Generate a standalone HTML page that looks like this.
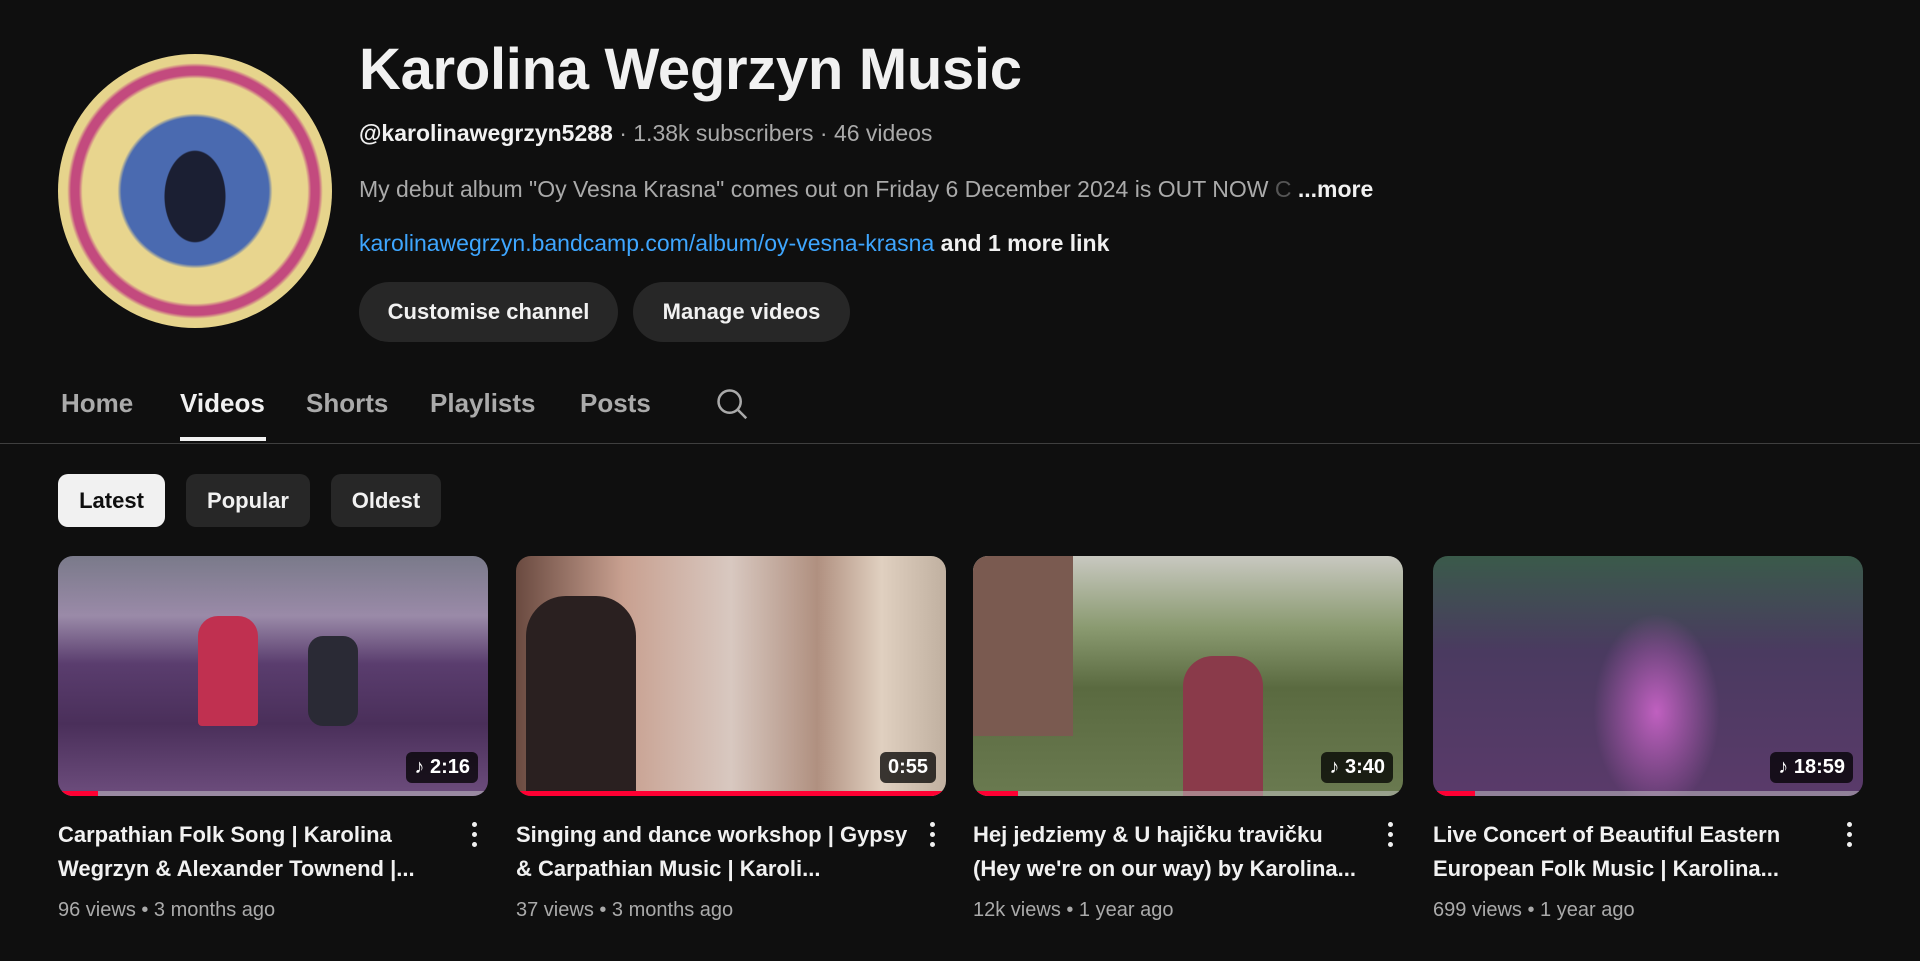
<!DOCTYPE html>
<html><head><meta charset="utf-8"><style>
*{margin:0;padding:0;box-sizing:border-box}
body{width:1920px;height:961px;background:#0f0f0f;color:#f1f1f1;font-family:"Liberation Sans",Arial,sans-serif;overflow:hidden;position:relative}
.abs{position:absolute}
.avatar{left:58px;top:54px;width:274px;height:274px;border-radius:50%;overflow:hidden;
background:radial-gradient(ellipse 50px 75px at 50% 52%,#1b1f33 0 60%,transparent 62%),
radial-gradient(circle at 50% 55%,#e8e0d0 0 8%,transparent 9%),
radial-gradient(circle at 50% 50%,#4a6ab0 0 38%,#e8d58e 40% 58%,#c34a7e 60% 64%,#e6d48c 66% 78%,#5a78c0 79% 82%,#e3cf86 83%);}
h1{left:359px;top:36px;font-size:58px;font-weight:700;letter-spacing:-0.3px;white-space:nowrap}
.meta1{left:359px;top:120px;font-size:23px;color:#aaa;white-space:nowrap}
.meta1 b{color:#f1f1f1}
.desc{left:359px;top:176px;font-size:23px;color:#aaa;white-space:nowrap}
.desc b{color:#f1f1f1}
.link{left:359px;top:230px;font-size:23px;white-space:nowrap;color:#f1f1f1;font-weight:700}
.link span{color:#3ea6ff;font-weight:400}
.btn{top:282px;height:60px;border-radius:30px;background:#272727;font-size:22px;font-weight:700;display:flex;align-items:center;justify-content:center}
.tab{top:388px;font-size:26px;font-weight:700;color:#aaa}
.sep{left:0;top:443px;width:1920px;height:1px;background:#3f3f3f}
.chip{top:474px;height:53px;border-radius:10px;background:#272727;font-size:22px;font-weight:700;display:flex;align-items:center;justify-content:center}
.th{top:556px;width:430px;height:240px;border-radius:15px;overflow:hidden}
.bar{position:absolute;left:0;bottom:0;height:5px;width:100%;background:rgba(200,200,200,.5)}
.bar i{display:block;height:5px;background:#f03}
.dur{position:absolute;right:10px;bottom:13px;background:rgba(0,0,0,.75);border-radius:6px;color:#fff;font-size:20px;font-weight:700;padding:4px 8px}
.tt{top:818px;width:400px;font-size:22px;font-weight:700;line-height:34px;color:#f1f1f1;height:68px;overflow:hidden;display:-webkit-box;-webkit-line-clamp:2;-webkit-box-orient:vertical}
.mm{top:899px;font-size:20px;color:#aaa;white-space:nowrap}
.dots{top:822px;width:6px}
.dots i{display:block;width:5px;height:5px;border-radius:50%;background:#f1f1f1;margin-bottom:5px}
</style></head><body>
<div class="abs avatar"></div>
<h1 class="abs">Karolina Wegrzyn Music</h1>
<div class="abs meta1"><b>@karolinawegrzyn5288</b> · 1.38k subscribers · 46 videos</div>
<div class="abs desc">My debut album "Oy Vesna Krasna" comes out on Friday 6 December 2024 is OUT NOW <span style="color:#555">C</span> <b>...more</b></div>
<div class="abs link"><span>karolinawegrzyn.bandcamp.com/album/oy-vesna-krasna</span> and 1 more link</div>
<div class="abs btn" style="left:359px;width:259px">Customise channel</div>
<div class="abs btn" style="left:633px;width:217px">Manage videos</div>
<div class="abs tab" style="left:61px">Home</div>
<div class="abs tab" style="left:180px;color:#f1f1f1">Videos</div>
<div class="abs" style="left:180px;top:437px;width:86px;height:4px;background:#f1f1f1"></div>
<div class="abs tab" style="left:306px">Shorts</div>
<div class="abs tab" style="left:430px">Playlists</div>
<div class="abs tab" style="left:580px">Posts</div>
<svg class="abs" style="left:713px;top:385px" width="38" height="38" viewBox="0 0 24 24" fill="none" stroke="#aaa" stroke-width="1.6"><circle cx="10.5" cy="10.5" r="7"/><path d="M15.5 15.5l5.5 5.5"/></svg>
<div class="abs sep"></div>
<div class="abs chip" style="left:58px;width:107px;background:#f1f1f1;color:#0f0f0f">Latest</div>
<div class="abs chip" style="left:186px;width:124px">Popular</div>
<div class="abs chip" style="left:331px;width:110px">Oldest</div>

<div class="abs th" style="left:58px;background:linear-gradient(180deg,#7a7a8a 0%,#9a8aa8 25%,#5a3d6e 45%,#4a2f5a 70%,#6d4d7d 100%)">
<div class="abs" style="left:140px;top:60px;width:60px;height:110px;background:#c03050;border-radius:20px 20px 4px 4px"></div>
<div class="abs" style="left:250px;top:80px;width:50px;height:90px;background:#2a2a35;border-radius:15px"></div>
<div class="bar"><i style="width:40px"></i></div><div class="dur">♪ 2:16</div></div>
<div class="abs th" style="left:516px;background:linear-gradient(90deg,#6a4a40 0%,#c8a090 25%,#d8c8c0 50%,#b09080 70%,#e0d0c0 85%,#c0b0a0 100%)">
<div class="abs" style="left:10px;top:40px;width:110px;height:200px;background:#2a2020;border-radius:40px 40px 0 0"></div>
<div class="bar" style="background:#f03"></div><div class="dur">0:55</div></div>
<div class="abs th" style="left:973px;background:linear-gradient(180deg,#c8c8c0 0%,#8a9a70 30%,#5a6a40 55%,#6a7a50 100%)">
<div class="abs" style="left:0;top:0;width:100px;height:180px;background:#7a5a50"></div>
<div class="abs" style="left:210px;top:100px;width:80px;height:140px;background:#8a3a4a;border-radius:30px 30px 0 0"></div>
<div class="bar"><i style="width:45px"></i></div><div class="dur">♪ 3:40</div></div>
<div class="abs th" style="left:1433px;background:radial-gradient(ellipse 90px 140px at 52% 65%,#c060c0,transparent 70%),linear-gradient(180deg,#3a5a4a 0%,#4a3a60 40%,#5a3a6a 100%)">
<div class="bar"><i style="width:42px"></i></div><div class="dur">♪ 18:59</div></div>

<div class="abs tt" style="left:58px">Carpathian Folk Song | Karolina Wegrzyn &amp; Alexander Townend |...</div>
<div class="abs tt" style="left:516px">Singing and dance workshop | Gypsy &amp; Carpathian Music | Karoli...</div>
<div class="abs tt" style="left:973px">Hej jedziemy &amp; U hajičku travičku (Hey we're on our way) by Karolina...</div>
<div class="abs tt" style="left:1433px">Live Concert of Beautiful Eastern European Folk Music | Karolina...</div>
<div class="abs dots" style="left:472px"><i></i><i></i><i></i></div>
<div class="abs dots" style="left:930px"><i></i><i></i><i></i></div>
<div class="abs dots" style="left:1388px"><i></i><i></i><i></i></div>
<div class="abs dots" style="left:1847px"><i></i><i></i><i></i></div>
<div class="abs mm" style="left:58px">96 views • 3 months ago</div>
<div class="abs mm" style="left:516px">37 views • 3 months ago</div>
<div class="abs mm" style="left:973px">12k views • 1 year ago</div>
<div class="abs mm" style="left:1433px">699 views • 1 year ago</div>
</body></html>
